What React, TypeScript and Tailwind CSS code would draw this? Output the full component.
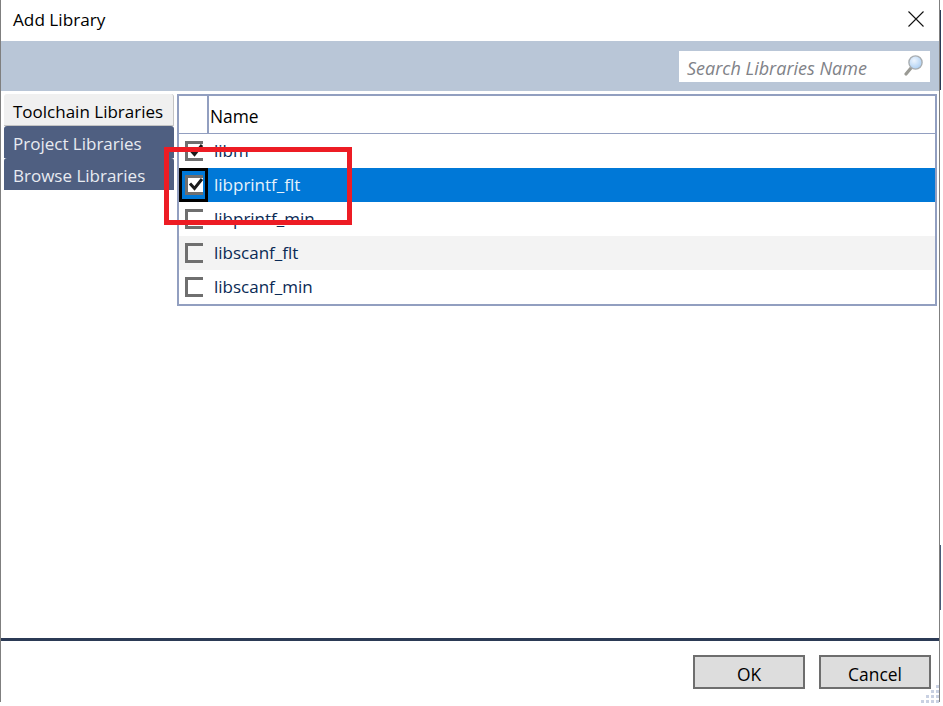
const TABS = [
  { label: 'Toolchain Libraries', active: true },
  { label: 'Project Libraries', active: false },
  { label: 'Browse Libraries', active: false },
];

const ROWS = [
  { name: 'libm', checked: true, selected: false, shaded: false },
  { name: 'libprintf_flt', checked: true, selected: true, shaded: false },
  { name: 'libprintf_min', checked: false, selected: false, shaded: false },
  { name: 'libscanf_flt', checked: false, selected: false, shaded: true },
  { name: 'libscanf_min', checked: false, selected: false, shaded: false },
];

const GRIP_DOTS = [
  [11, 0], [11, 5], [6, 5], [11, 10], [6, 10], [1, 10], [11, 15], [6, 15], [1, 15], [-4, 15],
];

function SearchIcon() {
  return (
    <svg width="20" height="24" viewBox="0 0 20 24">
      <defs>
        <radialGradient id="lens" cx="0.4" cy="0.35" r="0.7">
          <stop offset="0" stopColor="#eef6ff" />
          <stop offset="1" stopColor="#a9cdf2" />
        </radialGradient>
      </defs>
      <line x1="7" y1="14" x2="2" y2="20" stroke="#9a9a94" strokeWidth="3.2" strokeLinecap="round" />
      <circle cx="11.5" cy="8.5" r="6.6" fill="url(#lens)" stroke="#a9aeb2" strokeWidth="1.4" />
    </svg>
  );
}

function Checkbox({ checked, selected }: { checked: boolean; selected: boolean }) {
  return (
    <div className={`flex h-[34px] w-[29px] shrink-0 items-center justify-center ${selected ? 'border-[3px] border-black' : ''}`}>
      <div className={`relative h-[20px] w-[18px] border-[3px] border-r-0 border-[#6f6f6f] ${selected ? 'bg-white' : ''}`}>
        {checked && (
          <svg className="absolute left-[-1px] top-[-1px] overflow-visible" width="16" height="16" viewBox="0 0 16 16">
            <path d="M3 6.5 L7.5 11.5 L15 2" fill="none" stroke="#1a1a1a" strokeWidth="3" />
          </svg>
        )}
      </div>
    </div>
  );
}

export default function App() {
  return (
    <div className="relative h-[706px] w-[943px] overflow-hidden bg-white font-['Open_Sans','Noto_Sans',sans-serif] text-black">
      <div className="flex h-[702px] w-[940px] flex-col border-x border-[#7f7f7f] bg-white">
        <div className="flex h-[41px] shrink-0 items-center justify-between pl-[12px] pr-[15px]">
          <span className="pb-[2px] text-[17.2px] leading-none">Add Library</span>
          <svg className="mb-[4px]" width="16" height="16" viewBox="0 0 16 16">
            <path d="M0.5 0.5 L15.5 15.5 M15.5 0.5 L0.5 15.5" stroke="#111" strokeWidth="1.1" />
          </svg>
        </div>

        <div className="flex h-[50px] shrink-0 items-center justify-end bg-[#b9c6d7] pr-[9px]">
          <div className="flex h-[31px] w-[251px] items-center justify-between bg-white pl-[8px] pr-[6px]">
            <span className="pt-[4px] text-[18px] italic leading-none text-[#7f8288]">Search Libraries Name</span>
            <SearchIcon />
          </div>
        </div>

        <div className="flex min-h-0 flex-1 items-start pl-[3px] pt-[3px]">
          <div className="flex w-[170px] shrink-0 flex-col">
            {TABS.map((tab) => (
              <div
                key={tab.label}
                className={`flex h-[32px] items-center rounded-t-[3px] pl-[9px] text-[17px] leading-none ${
                  tab.active ? 'border-r border-b border-[#c4c4c4] bg-[#f0f0f0] pt-[4px] text-black' : 'bg-[#4f5f81] pt-[3px] text-[#e8ebf1]'
                }`}
              >
                {tab.label}
              </div>
            ))}
          </div>
          <div className="ml-[3px] w-[760px] shrink-0 border-2 border-[#929fc0] bg-white">
            <div className="flex h-[38px] items-center border-b border-[#929fc0]">
              <div className="h-full w-[30px] border-r-2 border-[#929fc0]" />
              <span className="pl-[1px] pt-[5px] text-[17.4px] leading-none">Name</span>
            </div>
            {ROWS.map((row) => (
              <div
                key={row.name}
                className={`flex h-[34px] items-center ${row.selected ? 'bg-[#0078d7] text-[#e6f2fb]' : row.shaded ? 'bg-[#f3f3f3] text-[#0a2a55]' : 'text-[#0a2a55]'}`}
              >
                <Checkbox checked={row.checked} selected={row.selected} />
                <span className="pb-[2px] pl-[6px] text-[17px] leading-none">{row.name}</span>
              </div>
            ))}
          </div>
        </div>

        <div className="h-[3px] shrink-0 bg-[#2b3a55]" />
        <div className="flex h-[61px] shrink-0 items-start justify-end gap-[14px] pr-[8px] pt-[14px]">
          <button className="h-[34px] w-[112px] border-2 border-[#6e6e6e] bg-[#dddddd] pt-[5px] text-[17.4px] leading-none">OK</button>
          <button className="h-[34px] w-[112px] border-2 border-[#6e6e6e] bg-[#dddddd] pt-[5px] text-[17.4px] leading-none">Cancel</button>
        </div>
      </div>

      {/* window behind the dialog, showing at its edge */}
      <div className="absolute left-[940px] top-[10px] h-[80px] w-px bg-[#2b3a55]" />
      <div className="absolute left-[940px] top-[545px] h-[65px] w-px bg-[#4a5a78]" />

      {/* grip in the corner of the window */}
      {GRIP_DOTS.map(([x, y]) => (
        <div key={`${x}-${y}`} className="absolute h-[3px] w-[3px] bg-[#c9d1e2]" style={{ left: 925 + x, top: 685 + y }} />
      ))}

      {/* red annotation drawn over the dialog */}
      <div className="absolute left-[164px] top-[147px] h-[78px] w-[188px] border-[5px] border-[#ed1c24]" />
    </div>
  );
}
